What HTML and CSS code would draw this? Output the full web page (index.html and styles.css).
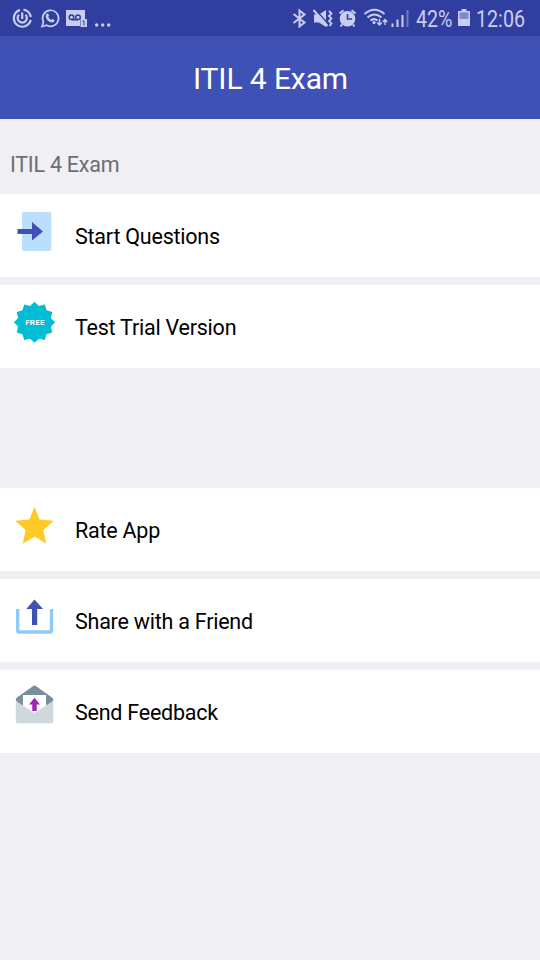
FILE: index.html
```html
<!DOCTYPE html>
<html lang="en">
<head>
<meta charset="UTF-8" />
<title>ITIL 4 Exam</title>
<link rel="stylesheet" href="styles.css">
</head>
<body>

<div class="statusbar">
  <svg class="status-left" width="120" height="36" viewBox="0 0 120 36">
    <g fill="none" stroke="#c9cdf0" stroke-width="2.2">
      <path d="M23.5 9.6 A8.6 8.6 0 0 1 30.8 17"/>
      <path d="M30.8 20 A8.6 8.6 0 1 1 20 9.9"/>
      <path d="M19 14.8 A4.6 4.6 0 1 0 25.5 14.8"/>
      <path d="M22.2 12.5 V19"/>
    </g>
    <path d="M42 26.5 L43.4 21.8 A8 8 0 1 1 46.6 25.2 Z" fill="none" stroke="#c9cdf0" stroke-width="1.7"/>
    <path d="M46.5 13.8 Q47.5 13 48.4 14 L49 15.8 L48.2 17 Q49.3 19.2 51.3 20 L52.5 19 L54.5 20 Q54.6 22.3 52 22.4 Q46 21.5 45.7 16 Z" fill="#c9cdf0"/>
    <path d="M66 10 H85 V19 H80 V26 H66 Z" fill="#c9cdf0"/>
    <g fill="none" stroke="#303f9f" stroke-width="1.5">
      <circle cx="71.5" cy="17.3" r="2.3"/>
      <circle cx="78" cy="17.3" r="2.3"/>
      <path d="M71.5 19.8 H78"/>
    </g>
    <rect x="80.5" y="19" width="6.5" height="8" fill="#c9cdf0"/>
    <path d="M82.5 21.5 L84 20.7 V25.5" fill="none" stroke="#303f9f"/>
    <g fill="#c9cdf0">
      <circle cx="96.7" cy="25" r="1.7"/>
      <circle cx="102.7" cy="25" r="1.7"/>
      <circle cx="108.7" cy="25" r="1.7"/>
    </g>
  </svg>
  <svg class="status-right" width="260" height="36" viewBox="280 0 260 36">
    <!-- bluetooth -->
    <path d="M293.5 14 L304.5 22.5 L299.5 26.5 V10.5 L304.5 14.5 L293.5 23" fill="none" stroke="#c9cdf0" stroke-width="2"/>
    <!-- muted, vibrating -->
    <path d="M314 14.5 H319 L326 10 V27 L319 22.5 H314 Z" fill="#c9cdf0"/>
    <path d="M315 9 L329 25" stroke="#303f9f" stroke-width="1.5"/>
    <path d="M313.5 10 L327.5 26" stroke="#c9cdf0" stroke-width="2"/>
    <path d="M329 11 L331.5 13.5 L329 16 L331.5 18.5 L329 21 L331.5 23.5 L329.5 26" fill="none" stroke="#c9cdf0" stroke-width="1.8"/>
    <!-- alarm -->
    <circle cx="347.5" cy="18.8" r="7.8" fill="#c9cdf0"/>
    <path d="M339.5 13.5 L343.5 10.2 M351.5 10.2 L355.5 13.5 M342 24.5 L340.5 26.5 M353 24.5 L354.5 26.5" stroke="#c9cdf0" stroke-width="2"/>
    <path d="M347.5 14 V19 H352" fill="none" stroke="#303f9f" stroke-width="1.6"/>
    <!-- wifi -->
    <g fill="none" stroke="#c9cdf0" stroke-width="2">
      <path d="M364.5 14 Q374.5 5.5 384.5 14"/>
      <path d="M367.5 17.5 Q374.5 11.5 381.5 17.5"/>
      <path d="M370.5 20.5 Q374 17.8 377.5 20.5"/>
    </g>
    <circle cx="374" cy="22.6" r="1.6" fill="#c9cdf0"/>
    <path d="M379.5 19 V25 M377.2 22.5 L379.5 25 L381.8 22.5 M385 25 V19.5 M382.7 22 L385 19.5 L387.3 22" fill="none" stroke="#c9cdf0" stroke-width="1.4"/>
    <!-- signal -->
    <path d="M392.5 23.5 V27 M397.5 19.5 V27 M402.5 15 V27" stroke="#c9cdf0" stroke-width="2"/>
    <path d="M407.5 10 V27" stroke="#6f79c4" stroke-width="2"/>
    <text class="status-text" x="416" y="27" textLength="36.5" lengthAdjust="spacingAndGlyphs">42%</text>
    <!-- battery -->
    <path d="M461.5 9 H466.5 V11 H470 V26 H458 V11 H461.5 Z" fill="#c9cdf0"/>
    <rect x="459.5" y="12.5" width="9" height="6.5" fill="#7f88cc"/>
    <text class="status-text" x="476" y="27" textLength="49" lengthAdjust="spacingAndGlyphs">12:06</text>
  </svg>
</div>

<div class="header">ITIL 4 Exam</div>

<div class="section-title">ITIL 4 Exam</div>

<div class="menu">
  <div class="item">
    <svg class="icon" viewBox="0 0 50 50">
      <rect x="12" y="6" width="29.3" height="39" rx="2" fill="#bbdefb"/>
      <path d="M7.5 23 H22 V16 L33 25.5 L22 34.5 V28 H7.5 Z" fill="#3f51b5"/>
    </svg>
    <span>Start Questions</span>
  </div>
  <div class="item">
    <svg class="icon" viewBox="0 0 50 50">
      <polygon fill="#00bcd4" points="24.5,4.8 28.9,8.9 34.8,7.5 36.5,13.3 42.3,15 40.9,20.9 45,25.3 40.9,29.7 42.3,35.6 36.5,37.3 34.8,43.1 28.9,41.7 24.5,45.8 20.1,41.7 14.2,43.1 12.5,37.3 6.7,35.6 8.1,29.7 4,25.3 8.1,20.9 6.7,15 12.5,13.3 14.2,7.5 20.1,8.9"/>
      <text class="badge-text" x="15.2" y="28.3" textLength="19.2">FREE</text>
    </svg>
    <span>Test Trial Version</span>
  </div>
</div>

<div class="menu">
  <div class="item">
    <svg class="icon" viewBox="0 0 50 50">
      <polygon fill="#ffca28" points="24.5,6.8 29.6,19.4 43.9,20.7 33.3,29.9 36.3,43.8 24.5,36.6 12.7,43.8 15.7,29.9 5.1,20.7 19.4,19.4"/>
    </svg>
    <span>Rate App</span>
  </div>
  <div class="item">
    <svg class="icon" viewBox="0 0 50 50">
      <path d="M7.7 18 V39.5 Q7.7 41 9.2 41 H40 Q41.5 41 41.5 39.5 V18" fill="none" stroke="#90caf9" stroke-width="3.4"/>
      <path d="M24.5 8.5 L33 18 H27.2 V34 H22 V18 H16.3 Z" fill="#3f51b5"/>
    </svg>
    <span>Share with a Friend</span>
  </div>
  <div class="item">
    <svg class="icon" viewBox="0 0 50 50">
      <path d="M43.3 18 Q43.3 16.3 42 15.4 L25.8 3.9 Q24.5 3 23.2 3.9 L7 15.4 Q5.8 16.3 5.8 18 L10 26 H39 Z" fill="#78909c"/>
      <path d="M13 13 H36 V28 L24.5 34 L13 28 Z" fill="#fff"/>
      <path d="M5.8 18.7 L24.5 31 L43.3 18.7 V39 Q43.3 41.2 41 41.2 H8 Q5.8 41.2 5.8 39 Z" fill="#cfd8dc"/>
      <path d="M24.5 15.7 L30 22.6 H26.7 V29 H22.3 V22.6 H19 Z" fill="#9c27b0"/>
    </svg>
    <span>Send Feedback</span>
  </div>
</div>

</body>
</html>
```
FILE: styles.css
```css
body {
  margin: 0;
  font-family: Roboto, sans-serif;
  background: #efeff4;
  color: #000;
}
.statusbar {
  display: flex;
  justify-content: space-between;
  height: 36px;
  background: #303f9f;
}
.status-text {
  font-size: 23px;
  fill: #c9cdf0;
}
.header {
  height: 83px;
  line-height: 85px;
  background: #3f51b5;
  color: #fff;
  font-size: 30px;
  letter-spacing: -0.1px;
  text-indent: 1px;
  text-align: center;
}
.section-title {
  height: 75px;
  padding-left: 10px;
  box-sizing: border-box;
  line-height: 92px;
  font-size: 21.5px;
  letter-spacing: -0.25px;
  color: #6d6d72;
}
.menu {
  display: flex;
  flex-direction: column;
  gap: 8px;
  margin-bottom: 120px;
}
.item {
  display: flex;
  height: 83px;
  padding-left: 10px;
  background: #fff;
  font-size: 21.5px;
  letter-spacing: -0.23px;
  line-height: 85px;
}
.icon {
  width: 50px;
  height: 50px;
  margin: 12px 15px 0 0;
}
.badge-text {
  font-size: 8px;
  font-weight: bold;
  letter-spacing: 0;
  fill: #fff;
}
```
